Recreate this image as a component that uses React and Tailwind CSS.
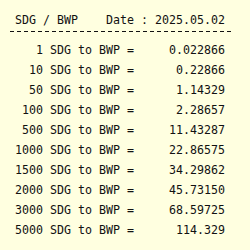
const rows = [
  ["1", "0.022866"],
  ["10", "0.22866"],
  ["50", "1.14329"],
  ["100", "2.28657"],
  ["500", "11.43287"],
  ["1000", "22.86575"],
  ["1500", "34.29862"],
  ["2000", "45.73150"],
  ["3000", "68.59725"],
  ["5000", "114.329"],
];

export default function App() {
  return (
    <div className="w-[250px] h-[250px] overflow-hidden bg-[#ffffe0] text-[#111] font-['DejaVu_Sans_Mono',monospace] text-[11.63px]">
      {/* header */}
      <div className="flex justify-between pt-[13px] pl-[15px] pr-[25px] leading-[14px] whitespace-pre">
        <span>SDG / BWP</span>
        <span>Date : 2025.05.02</span>
      </div>
      {/* dashed rule */}
      <div className="mt-[4px] ml-[10px] w-[222px] h-[1px] bg-[repeating-linear-gradient(90deg,#111_0_4px,transparent_4px_7px)]" />

      {/* rates */}
      <div className="mt-[8px] pl-[15px] pr-[25px]">
        {rows.map(([amt, val]) => (
          <div key={amt} className="grid grid-cols-[119px_1fr] h-[20px] leading-[20px] whitespace-pre">
            <span className="text-right">{amt} SDG to BWP =</span>
            <span className="text-right">{val}</span>
          </div>
        ))}
      </div>
    </div>
  );
}
